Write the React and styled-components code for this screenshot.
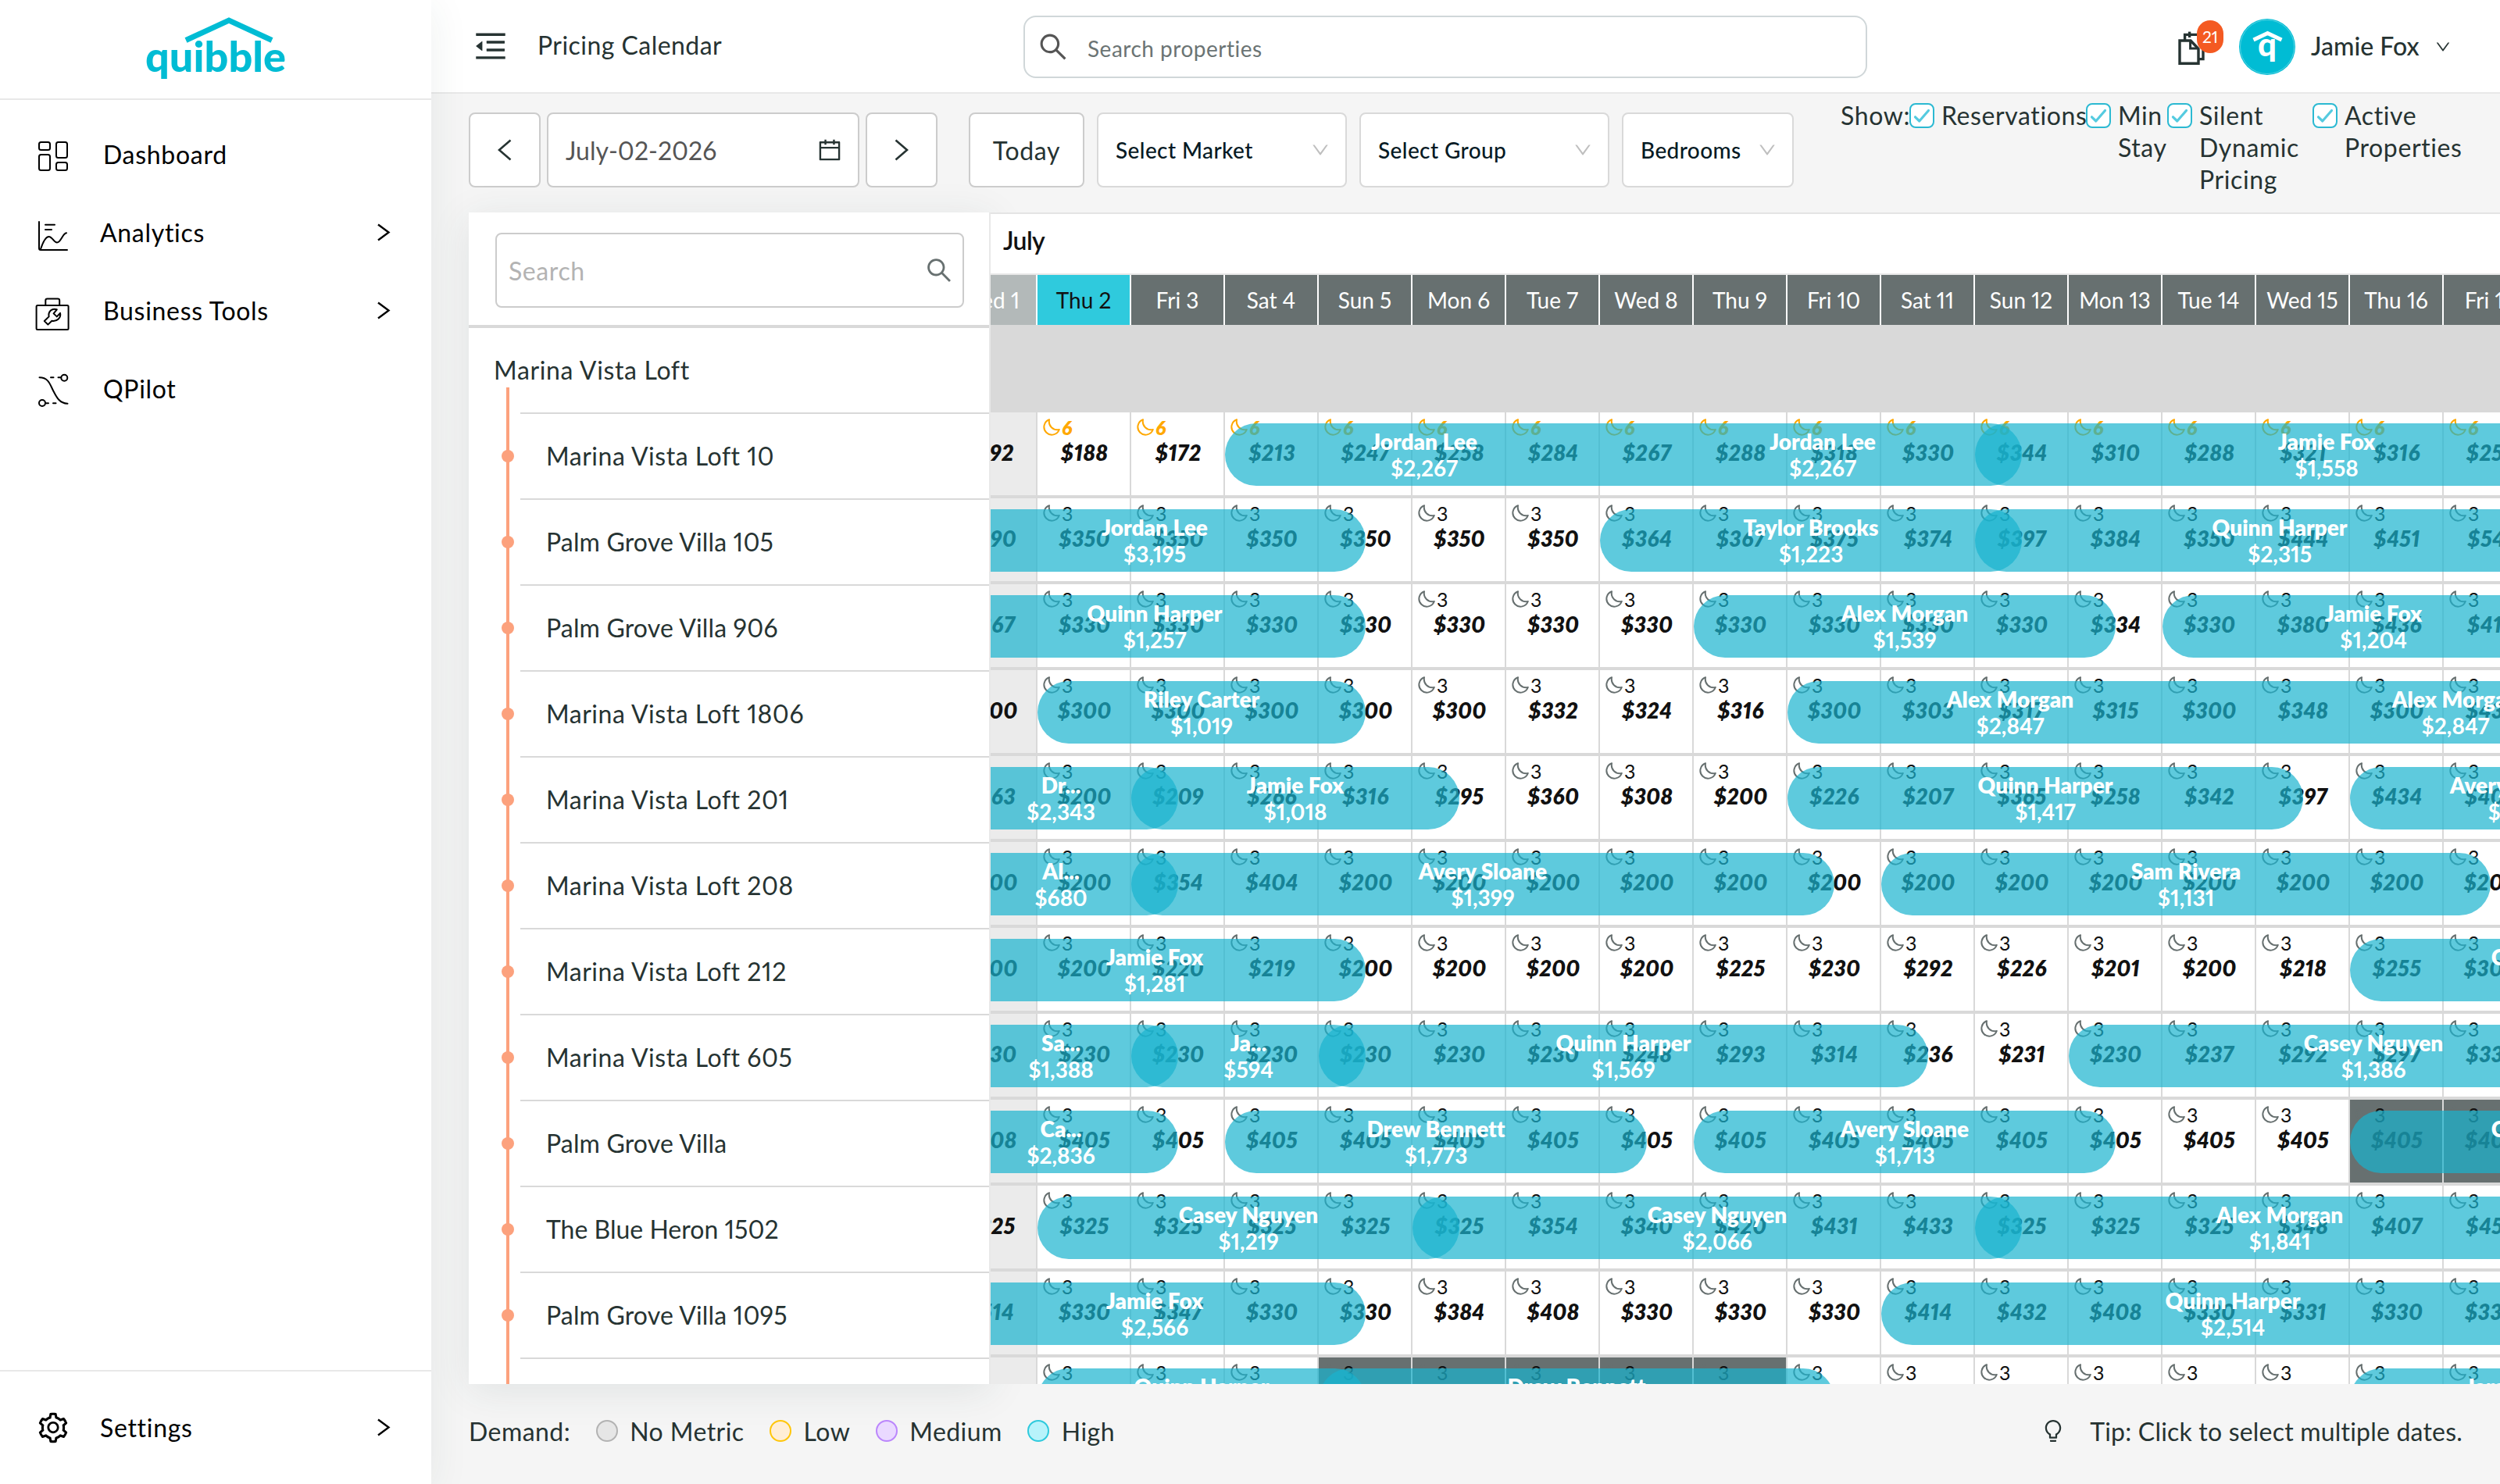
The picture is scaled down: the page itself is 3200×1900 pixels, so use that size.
import React from "react";
import styled, { createGlobalStyle } from "styled-components";
import {
  AiOutlineMenuFold,
  AiOutlineSearch,
  AiOutlineCalendar,
  AiOutlineDown,
  AiOutlineSetting,
  AiOutlineBulb,
} from "react-icons/ai";

const Global = createGlobalStyle`
  *, *::before, *::after { box-sizing: border-box; }
  body {
    margin: 0;
    background: #f5f5f5;
    font-family: Lato, "Open Sans", sans-serif;
    font-size: 32px;
    font-variant-numeric: proportional-nums;
    font-variant-ligatures: none;
    color: #263332;
    -webkit-font-smoothing: antialiased;
  }
`;

const COLUMN = 120;

/* ---------- shell ---------- */
const Page = styled.div`
  display: flex;
  width: 3200px;
  height: 1900px;
  overflow: hidden;
  background: #f5f5f5;
`;

const Sidebar = styled.aside`
  position: relative;
  z-index: 3;
  display: flex;
  flex-direction: column;
  flex: 0 0 552px;
  background: #fff;
  color: #000;
  box-shadow: 0 8px 48px rgba(38, 80, 70, 0.08);
`;

const LogoBox = styled.div`
  height: 128px;
  border-bottom: 2px solid #e8e8e8;
  display: flex;
  justify-content: center;
`;

const Nav = styled.nav`
  flex: 1;
  padding-top: 20px;
`;

const NavRow = styled.div`
  display: flex;
  align-items: center;
  height: 100px;
  padding-right: 52px;
`;

const NavIcon = styled.span`
  display: flex;
  justify-content: center;
  width: 136px;
  padding-top: ${(p) => p.$drop || 0}px;
  margin-right: ${(p) => p.$shift || 0}px;
  flex: none;
`;

const NavLabel = styled.span`
  flex: 1;
  margin-top: -2px;
  letter-spacing: 0.7px;
  white-space: nowrap;
`;

const SidebarFooter = styled.div`
  height: 146px;
  padding-top: 22px;
  border-top: 2px solid #e8e8e8;
`;

const Main = styled.main`
  display: flex;
  flex-direction: column;
  flex: 1;
  min-width: 0;
`;

/* ---------- header ---------- */
const Header = styled.header`
  display: flex;
  align-items: center;
  height: 120px;
  padding: 0 62px 0 52px;
  background: #fff;
  border-bottom: 2px solid #e8e8e8;
`;

const Title = styled.h1`
  margin: 0 0 3px 36px;
  width: 622px;
  font-size: 32px;
  font-weight: 400;
  letter-spacing: 0.45px;
`;

const SearchBox = styled.div`
  display: flex;
  align-items: center;
  width: 1080px;
  height: 80px;
  margin-top: 2px;
  padding-left: 15px;
  gap: 23px;
  border: 2px solid #d0d7d9;
  border-radius: 16px;
  color: #555;
  span {
    margin-top: 3px;
    color: #6b7474;
    font-size: 28px;
    letter-spacing: 0.5px;
  }
`;

const UserArea = styled.div`
  display: flex;
  align-items: center;
  flex: 1;
  padding: 2px 0 0 396px;
`;

const DocButton = styled.div`
  position: relative;
  width: 80px;
  height: 48px;
  margin-top: 4px;
`;

const Badge = styled.span`
  position: absolute;
  left: 26px;
  top: -12px;
  width: 34px;
  height: 42px;
  border-radius: 17px;
  background: #f45a22;
  color: #fff;
  font-size: 21px;
  line-height: 42px;
  text-align: center;
`;

const UserName = styled.span`
  margin: -4px 19px 0 20px;
  font-weight: 500;
  white-space: nowrap;
`;

/* ---------- toolbar ---------- */
const Toolbar = styled.div`
  display: flex;
  align-items: flex-start;
  height: 152px;
  padding: 24px 48px 0 48px;
`;

const Control = styled.div`
  display: flex;
  align-items: center;
  justify-content: ${(p) => (p.$spread ? "space-between" : "center")};
  flex: none;
  width: ${(p) => p.$w}px;
  height: 96px;
  margin-right: ${(p) => p.$mr || 0}px;
  padding: ${(p) => (p.$spread ? "0 19px 0 22px" : "0")};
  border: 2px solid ${(p) => (p.$light ? "#d9d9d9" : "#ccc")};
  border-radius: 8px;
  background: #fff;
  color: ${(p) => (p.$muted ? "#555" : "#263332")};
  letter-spacing: ${(p) => p.$track || 0}px;
  white-space: nowrap;
`;

const SelectLabel = styled.span`
  font-size: 28px;
  font-weight: 500;
  letter-spacing: 0.4px;
  color: #061a24;
`;

const ShowGroup = styled.div`
  display: flex;
  align-items: flex-start;
  margin: -17px 0 0 60px;
  letter-spacing: 0.6px;
  line-height: 41px;
`;

const ShowLabel = styled.span`
  width: 88px;
  white-space: nowrap;
`;

const CheckItem = styled.label`
  display: flex;
  align-items: flex-start;
  gap: 9px;
  width: ${(p) => p.$w}px;
`;

const CheckBox = styled.span`
  display: flex;
  flex: none;
  width: 32px;
  height: 32px;
  margin-top: 5px;
  border: 2px solid #2bb9d2;
  border-radius: 8px;
  background: #fff;
`;

/* ---------- board ---------- */
const Board = styled.section`
  display: flex;
  height: 1500px;
  padding-left: 48px;
`;

const ListPanel = styled.div`
  flex: none;
  width: 668px;
  border-right: 2px solid #e8e8e8;
  background: #fff;
  box-shadow: 0 8px 48px rgba(38, 70, 66, 0.1);
`;

const ListClip = styled.div`
  height: 1500px;
  overflow: hidden;
`;

const ListSearch = styled.div`
  height: 148px;
  padding: 26px 32px 0 34px;
  border-bottom: 4px solid #d9d9d9;
`;

const ListInput = styled.div`
  display: flex;
  align-items: center;
  justify-content: space-between;
  height: 96px;
  padding: 0 11px 0 15px;
  border: 2px solid #ccc;
  border-radius: 8px;
  color: #b3b3b3;
  letter-spacing: 0.6px;
`;

const GroupTitle = styled.div`
  height: 108px;
  padding-left: 32px;
  letter-spacing: 0.65px;
  line-height: 108px;
`;

const Tree = styled.div`
  position: relative;
  &::before {
    content: "";
    position: absolute;
    left: 48px;
    top: -32px;
    bottom: 0;
    width: 4px;
    background: #fca17d;
  }
`;

const PropertyRow = styled.div`
  position: relative;
  height: 110px;
  margin-left: 66px;
  padding-left: 33px;
  border-top: 2px solid #d9d9d9;
  letter-spacing: ${(p) => p.$track}px;
  line-height: 108px;
  white-space: nowrap;
  &::before {
    content: "";
    position: absolute;
    left: -24px;
    top: 46px;
    width: 16px;
    height: 16px;
    border-radius: 50%;
    background: #fca17d;
  }
`;

const Calendar = styled.div`
  position: relative;
  flex: 1;
  min-width: 0;
  height: 1500px;
  overflow: hidden;
  border-top: 2px solid #e4e4e4;
  background: #fff;
`;

const Month = styled.div`
  height: 78px;
  padding: 14px 0 0 16px;
  border-bottom: 2px solid #e8e8e8;
  color: #111;
  font-weight: 600;
  letter-spacing: -0.6px;
  line-height: 40px;
`;

const Track = styled.div`
  position: relative;
  display: flex;
  width: ${COLUMN * 17}px;
  margin-left: -60px;
`;

const DayHead = styled.div`
  flex: 0 0 ${COLUMN}px;
  height: 64px;
  border-right: 2px solid #fff;
  background: ${(p) => (p.$kind === "past" ? "#b3b9b9" : p.$kind === "today" ? "#2fcadd" : "#677070")};
  color: ${(p) => (p.$kind === "today" ? "#111" : "#fff")};
  font-size: 28px;
  line-height: 64px;
  text-align: center;
`;

const GroupBand = styled.div`
  height: 112px;
  background: #d9d9d9;
`;

const RateRow = styled(Track)`
  height: 110px;
  border-bottom: 4px solid #d9d9d9;
`;

const Cell = styled.div`
  flex: 0 0 ${COLUMN}px;
  height: 106px;
  padding-top: 8px;
  border-right: 2px solid #d9d9d9;
  background: ${(p) => (p.$kind === "past" ? "#ebebeb" : p.$kind === "closed" ? "#677070" : "#fff")};
`;

const MinStay = styled.div`
  display: flex;
  align-items: center;
  gap: 2px;
  height: 22px;
  padding-left: 7px;
  font-size: 25px;
  line-height: 22px;
  color: ${(p) => (p.$alert ? "#ffa800" : "#111")};
  font-style: ${(p) => (p.$alert ? "italic" : "normal")};
  font-weight: ${(p) => (p.$alert ? 800 : 400)};
  svg { color: ${(p) => (p.$alert ? "#ffa800" : "#677070")}; }
`;

const Price = styled.div`
  height: 34px;
  margin-top: 4px;
  padding-left: 2px;
  color: #111;
  font-size: 28px;
  font-style: italic;
  font-weight: 800;
  letter-spacing: 0.5px;
  line-height: 34px;
  text-align: center;
`;

const Stay = styled.div`
  position: absolute;
  top: 14px;
  display: flex;
  align-items: center;
  height: 80px;
  border-radius: 40px;
  background: rgba(26, 179, 206, 0.7);
`;

const StayText = styled.div`
  flex: 1;
  color: #fff;
  font-size: 28px;
  line-height: 34px;
  text-align: center;
  white-space: nowrap;
`;

const Guest = styled.div`
  font-weight: 800;
`;

const Amount = styled.div`
  font-weight: 700;
`;

/* ---------- footer ---------- */
const Footer = styled.footer`
  display: flex;
  align-items: center;
  height: 128px;
  padding: 0 48px 8px 48px;
  letter-spacing: 0.45px;
`;

const LegendItem = styled.span`
  display: flex;
  align-items: center;
  gap: 15.5px;
  margin-left: 32.5px;
`;

const Swatch = styled.i`
  width: 28px;
  height: 28px;
  border: 2px solid ${(p) => p.$line};
  border-radius: 50%;
  background: ${(p) => p.$fill};
`;

const Tip = styled.span`
  display: flex;
  align-items: center;
  gap: 31px;
  margin-left: auto;
  letter-spacing: 0.2px;
`;

/* ---------- drawings ---------- */
const Stroke = ({ w, h, sw = 2, children, ...rest }) => (
  <svg width={w} height={h} viewBox={`0 0 ${w} ${h}`} fill="none" stroke="currentColor" strokeWidth={sw} strokeLinecap="round" strokeLinejoin="round" {...rest}>
    {children}
  </svg>
);

const Chevron = ({ flip }) => (
  <Stroke w={20} h={28} sw={2.6} strokeLinecap="butt" strokeLinejoin="miter">
    <path d={flip ? "M17.5 1.5 L3 14 L17.5 26.5" : "M2.5 1.5 L17 14 L2.5 26.5"} />
  </Stroke>
);

const NavChevron = () => (
  <Stroke w={18} h={24} sw={2.4} strokeLinecap="butt" strokeLinejoin="miter">
    <path d="M2 1.5 L15.5 11.5 L2 21.5" />
  </Stroke>
);

const Moon = () => (
  <Stroke w={22} h={22} sw={2}>
    <path d="M8 1.2 A10 10 0 1 0 20.8 14 C13 15.5 6.5 9.5 8 1.2Z" />
  </Stroke>
);

const CheckMark = () => (
  <Stroke w={28} h={28} sw={3.2} color="#55cbe0">
    <path d="M5.5 15.8 L10.8 21 L22.5 7.5" />
  </Stroke>
);

const DashboardIcon = () => (
  <Stroke w={40} h={40}>
    <rect x="2" y="2" width="14" height="10" rx="2.5" />
    <rect x="2" y="18" width="14" height="20" rx="2.5" />
    <rect x="24" y="2" width="14" height="20" rx="2.5" />
    <rect x="24" y="28" width="14" height="10" rx="2.5" />
  </Stroke>
);

const AnalyticsIcon = () => (
  <Stroke w={40} h={40}>
    <path d="M2 2 V36 Q2 38 4 38 H38" />
    <path d="M4 37 C7 28 10 21 14.5 21 C19 21 21 28.5 25 28.5 C30 28.5 32 17 37 16.3" />
    <path d="M10 5.7 H22 M10 12 H18" />
  </Stroke>
);

const ToolsIcon = () => (
  <Stroke w={48} h={44}>
    <rect x="2.6" y="11" width="41" height="31" rx="1.5" />
    <path d="M14.3 11 V4.8 Q14.3 2.6 16.5 2.6 H30 Q32.2 2.6 32.2 4.8 V11" />
    <path d="M12.8 31 L17.4 35.6 L22.4 30.8 C29 32 34.5 27 33 20.8 L28.8 25.4 L24.6 21.4 L28.8 16.3 C22.5 14 17.4 19 18.6 25.4 Z" />
  </Stroke>
);

const PilotIcon = () => (
  <Stroke w={40} h={44}>
    <path d="M2.5 5.3 C14 5.3 16 14 20 22 S28 38.5 38.5 38.7" />
    <circle cx="34.3" cy="5.7" r="4" />
    <circle cx="6" cy="38" r="4" />
    <path d="M17 5.3 H20.5 M26.5 5.3 H30 M11 38.3 H14 M20 38.3 H23.5" />
  </Stroke>
);

const DocIcon = () => (
  <Stroke w={40} h={48} sw={3.4} strokeLinecap="butt" strokeLinejoin="miter">
    <path d="M4 14 H18 L28 24.5 V43.2 H4 Z" />
    <path d="M17.6 14 V24 H28" strokeWidth="3" />
    <path d="M10.6 13 V6.4 H28" />
    <path d="M28 37.6 H34 V14" />
    <path d="M16.6 2.6 V10" />
  </Stroke>
);

const Logo = () => (
  <svg width="190" height="110" viewBox="0 0 190 110">
    <path d="M57 51.5 L112 26 L167 51.5" fill="none" stroke="#00bcd4" strokeWidth="7" />
    <text x="5" y="91.5" fontFamily="Lato, sans-serif" fontWeight="900" fontSize="53" textLength="180" lengthAdjust="spacingAndGlyphs" fill="#00bcd4">quibble</text>
  </svg>
);

const Avatar = () => (
  <svg width="72" height="72" viewBox="0 0 72 72">
    <circle cx="36" cy="36" r="36" fill="#00bcd4" />
    <circle cx="36" cy="36" r="34.5" fill="none" stroke="#6fd9e6" strokeWidth="0.8" />
    <path d="M18.5 27 L36.5 18.5 L54.5 27" fill="none" stroke="#fff" strokeWidth="5" />
    <text x="36" y="47.5" fontFamily="Lato, sans-serif" fontWeight="900" fontSize="42" textAnchor="middle" fill="#fff">q</text>
  </svg>
);

/* ---------- data ---------- */
const DAYS = ["Wed 1", "Thu 2", "Fri 3", "Sat 4", "Sun 5", "Mon 6", "Tue 7", "Wed 8", "Thu 9", "Fri 10", "Sat 11", "Sun 12", "Mon 13", "Tue 14", "Wed 15", "Thu 16", "Fri 17"];

/* stays: [first column, last column, guest, amount, label count] — column 0 is Thu 2 */
const ROWS = [
  { name: "Marina Vista Loft 10", min: 6, rates: [192, 188, 172, 213, 247, 258, 284, 267, 288, 318, 330, 344, 310, 288, 321, 316, 255],
    stays: [[2, 10.5, "Jordan Lee", "$2,267", 2], [10, 17.5, "Jamie Fox", "$1,558"]] },
  { name: "Palm Grove Villa 105", min: 3, rates: [390, 350, 350, 350, 350, 350, 350, 364, 367, 375, 374, 397, 384, 350, 444, 451, 541],
    stays: [[-1, 3.5, "Jordan Lee", "$3,195"], [6, 10.5, "Taylor Brooks", "$1,223"], [10, 16.5, "Quinn Harper", "$2,315"]] },
  { name: "Palm Grove Villa 906", min: 3, rates: [367, 330, 330, 330, 330, 330, 330, 330, 330, 330, 330, 330, 334, 330, 380, 436, 412],
    stays: [[-1, 3.5, "Quinn Harper", "$1,257"], [7, 11.5, "Alex Morgan", "$1,539"], [12, 16.5, "Jamie Fox", "$1,204"]] },
  { name: "Marina Vista Loft 1806", min: 3, rates: [300, 300, 300, 300, 300, 300, 332, 324, 316, 300, 303, 317, 315, 300, 348, 300, 432],
    stays: [[0, 3.5, "Riley Carter", "$1,019"], [8, 17.5, "Alex Morgan", "$2,847", 2]] },
  { name: "Marina Vista Loft 201", min: 3, rates: [263, 200, 209, 266, 316, 295, 360, 308, 200, 226, 207, 365, 258, 342, 397, 434, 402],
    stays: [[-1, 1.5, "Dr...", "$2,343"], [1, 4.5, "Jamie Fox", "$1,018"], [8, 13.5, "Quinn Harper", "$1,417"], [14, 17.5, "Avery Sloane", "$908"]] },
  { name: "Marina Vista Loft 208", min: 3, rates: [200, 200, 354, 404, 200, 200, 200, 200, 200, 200, 200, 200, 200, 200, 200, 200, 200],
    stays: [[-1, 1.5, "Al...", "$680"], [1, 8.5, "Avery Sloane", "$1,399"], [9, 15.5, "Sam Rivera", "$1,131"]] },
  { name: "Marina Vista Loft 212", min: 3, rates: [200, 200, 220, 219, 200, 200, 200, 200, 225, 230, 292, 226, 201, 200, 218, 255, 300],
    stays: [[-1, 3.5, "Jamie Fox", "$1,281"], [14, 18.5, "Casey Nguyen", "$1,640"]] },
  { name: "Marina Vista Loft 605", min: 3, rates: [230, 230, 230, 230, 230, 230, 230, 248, 293, 314, 236, 231, 230, 237, 292, 297, 332],
    stays: [[-1, 1.5, "Sa...", "$1,388"], [1, 3.5, "Ja...", "$594"], [3, 9.5, "Quinn Harper", "$1,569"], [11, 17.5, "Casey Nguyen", "$1,386"]] },
  { name: "Palm Grove Villa", min: 3, closed: [14, 15], rates: [408, 405, 405, 405, 405, 405, 405, 405, 405, 405, 405, 405, 405, 405, 405, 405, 405],
    stays: [[-1, 1.5, "Ca...", "$2,836"], [2, 6.5, "Drew Bennett", "$1,773"], [7, 11.5, "Avery Sloane", "$1,713"], [14, 18.5, "Casey Nguyen", "$1,905"]] },
  { name: "The Blue Heron 1502", min: 3, rates: [325, 325, 325, 325, 325, 325, 354, 340, 420, 431, 433, 325, 325, 325, 348, 407, 452],
    stays: [[0, 4.5, "Casey Nguyen", "$1,219"], [4, 10.5, "Casey Nguyen", "$2,066"], [10, 16.5, "Alex Morgan", "$1,841"]] },
  { name: "Palm Grove Villa 1095", min: 3, rates: [514, 330, 347, 330, 330, 384, 408, 330, 330, 330, 414, 432, 408, 330, 331, 330, 330],
    stays: [[-1, 3.5, "Jamie Fox", "$2,566"], [9, 16.5, "Quinn Harper", "$2,514"]] },
  { name: "", min: 3, closed: [3, 4, 5, 6, 7], rates: Array(17).fill(330),
    stays: [[0, 3.5, "Quinn Harper", "$1,120"], [3, 8.5, "Drew Bennett", "$1,860"], [14, 17.5, "Jamie Fox", "$1,240"]] },
];

const LEGEND = [
  ["No Metric", "#e6e6e6", "#b3b3b3"],
  ["Low", "#ffeed6", "#ffc60a"],
  ["Medium", "#ead9ff", "#bb86fc"],
  ["High", "#b8f3fb", "#2fcadd"],
];

/* label, icon, label shift, icon drop, expandable */
const NAV = [
  ["Dashboard", DashboardIcon, -4, 4],
  ["Analytics", AnalyticsIcon, -8, 8, true],
  ["Business Tools", ToolsIcon, -4, 8, true],
  ["QPilot", PilotIcon, -4, 4],
];

const CHECKS = [["Reservations", 226], ["Min Stay", 104], ["Silent Dynamic Pricing", 186], ["Active Properties", 192]];

const tracking = (name) => (name.startsWith("Marina") ? 0.52 : name.startsWith("The") ? 0 : 0.15);

export default function App() {
  return (
    <>
      <Global />
      <Page>
        <Sidebar>
          <LogoBox><Logo /></LogoBox>
          <Nav>
            {NAV.map(([label, Icon, shift, drop, more]) => (
              <NavRow key={label}>
                <NavIcon $shift={shift} $drop={drop}><Icon /></NavIcon>
                <NavLabel>{label}</NavLabel>
                {more && <NavChevron />}
              </NavRow>
            ))}
          </Nav>
          <SidebarFooter>
            <NavRow>
              <NavIcon $shift={-8}><AiOutlineSetting size={44} /></NavIcon>
              <NavLabel>Settings</NavLabel>
              <NavChevron />
            </NavRow>
          </SidebarFooter>
        </Sidebar>
        <Main>
          <Header>
            <AiOutlineMenuFold size={48} />
            <Title>Pricing Calendar</Title>
            <SearchBox><AiOutlineSearch size={42} /><span>Search properties</span></SearchBox>
            <UserArea>
              <DocButton><DocIcon /><Badge>21</Badge></DocButton>
              <Avatar />
              <UserName>Jamie Fox</UserName>
              <AiOutlineDown size={22} />
            </UserArea>
          </Header>
          <Toolbar>
            <Control $w={92} $mr={8}><Chevron flip /></Control>
            <Control $w={400} $mr={8} $spread $muted>July-02-2026<AiOutlineCalendar size={34} color="#263332" /></Control>
            <Control $w={92} $mr={40}><Chevron /></Control>
            <Control $w={148} $mr={16} $track={0.7}>Today</Control>
            <Control $w={320} $mr={16} $spread $light><SelectLabel>Select Market</SelectLabel><AiOutlineDown size={26} color="#bfbfbf" /></Control>
            <Control $w={320} $mr={16} $spread $light><SelectLabel>Select Group</SelectLabel><AiOutlineDown size={26} color="#bfbfbf" /></Control>
            <Control $w={220} $spread $light><SelectLabel>Bedrooms</SelectLabel><AiOutlineDown size={26} color="#bfbfbf" /></Control>
            <ShowGroup>
              <ShowLabel>Show:</ShowLabel>
              {CHECKS.map(([label, w]) => (
                <CheckItem key={label} $w={w}><CheckBox><CheckMark /></CheckBox>{label}</CheckItem>
              ))}
            </ShowGroup>
          </Toolbar>
          <Board>
            <ListPanel>
              <ListClip>
                <ListSearch>
                  <ListInput>Search<AiOutlineSearch size={38} color="#677070" /></ListInput>
                </ListSearch>
                <GroupTitle>Marina Vista Loft</GroupTitle>
                <Tree>
                  {ROWS.map((row, i) => (
                    <PropertyRow key={i} $track={tracking(row.name)}>{row.name}</PropertyRow>
                  ))}
                </Tree>
              </ListClip>
            </ListPanel>
            <Calendar>
              <Month>July</Month>
              <Track>
                {DAYS.map((day, i) => (
                  <DayHead key={day} $kind={i === 0 ? "past" : i === 1 ? "today" : "future"}>{day}</DayHead>
                ))}
              </Track>
              <GroupBand />
              {ROWS.map((row, i) => (
                <RateRow key={i}>
                  {row.rates.map((rate, c) => (
                    <Cell key={c} $kind={c === 0 ? "past" : row.closed?.includes(c - 1) ? "closed" : "open"}>
                      <MinStay $alert={row.min === 6}>{c > 0 && <><Moon />{row.min}</>}</MinStay>
                      <Price>${rate}</Price>
                    </Cell>
                  ))}
                  {row.stays.map(([from, to, guest, amount, labels = 1], s) => (
                    <Stay key={s} style={{ left: (from + 1) * COLUMN, width: (to - from) * COLUMN }}>
                      {Array.from({ length: labels }, (_, n) => (
                        <StayText key={n}><Guest>{guest}</Guest><Amount>{amount}</Amount></StayText>
                      ))}
                    </Stay>
                  ))}
                </RateRow>
              ))}
            </Calendar>
          </Board>
          <Footer>
            Demand:
            {LEGEND.map(([label, fill, line]) => (
              <LegendItem key={label}><Swatch $fill={fill} $line={line} />{label}</LegendItem>
            ))}
            <Tip><AiOutlineBulb size={32} />Tip: Click to select multiple dates.</Tip>
          </Footer>
        </Main>
      </Page>
    </>
  );
}
